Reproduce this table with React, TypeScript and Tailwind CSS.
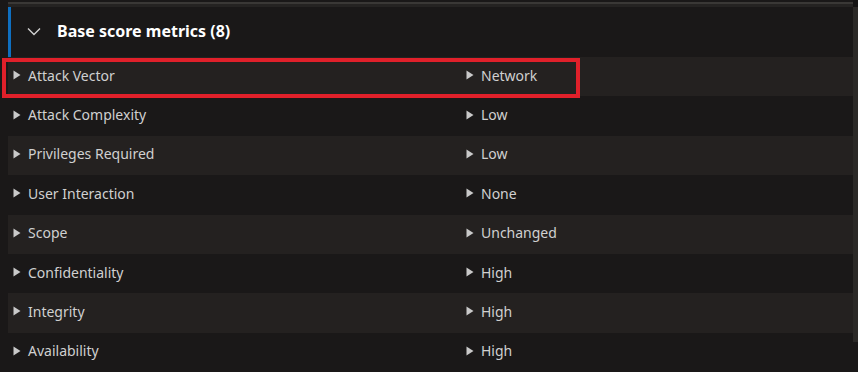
import React from "react";

const rows: [string, string][] = [
  ["Attack Vector", "Network"],
  ["Attack Complexity", "Low"],
  ["Privileges Required", "Low"],
  ["User Interaction", "None"],
  ["Scope", "Unchanged"],
  ["Confidentiality", "High"],
  ["Integrity", "High"],
  ["Availability", "High"],
];

function Tri() {
  return (
    <svg width="8" height="10" viewBox="0 0 8 10" className="shrink-0">
      <path d="M0.5 0.5 L7.5 5 L0.5 9.5 Z" fill="#c9c9c9" />
    </svg>
  );
}

export default function App() {
  return (
    <div
      className="relative w-[858px] h-[372px] overflow-hidden bg-[#1a1818] flex"
      style={{ fontFamily: '"Noto Sans", "Open Sans", sans-serif' }}
    >
      <div className="w-[8px] shrink-0" />
      <div className="w-[845px] shrink-0 flex flex-col">
        <div className="h-[2px]" />
        <div className="h-[2px] bg-[#3a3836]" />
        <div className="h-[3px] bg-[#252322]" />
        <div className="h-[51px] pb-[1px] flex items-center border-l-[3px] border-[#0f6fc0]">
          <svg width="14" height="9" viewBox="0 0 14 9" className="ml-[16px]">
            <path d="M1 1.5 L7 7.5 L13 1.5" stroke="#d0d0d0" strokeWidth="1.4" fill="none" />
          </svg>
          <span className="ml-[16px] text-[16px] font-bold text-white">Base score metrics (8)</span>
        </div>
        {rows.map(([k, v], i) => (
          <div
            key={k}
            className={`h-[40px] pb-[3px] flex items-center text-[14px] text-[#d0d0d0] ${i % 2 === 0 ? "bg-[#242120]" : ""}`}
          >
            <div className="w-[458px] flex items-center gap-[7px] pl-[5px]">
              <Tri />
              <span>{k}</span>
            </div>
            <div className="flex items-center gap-[7px]">
              <Tri />
              <span>{v}</span>
            </div>
          </div>
        ))}
      </div>
      <div className="w-[5px] shrink-0 flex flex-col">
        <div className="h-[7px] bg-[#151414]" />
        <div className="h-[335px] bg-[#2b2927]" />
      </div>
      <div className="absolute left-[2px] top-[58px] w-[578px] h-[40px] border-[4px] border-[#e0202a]" />
    </div>
  );
}
